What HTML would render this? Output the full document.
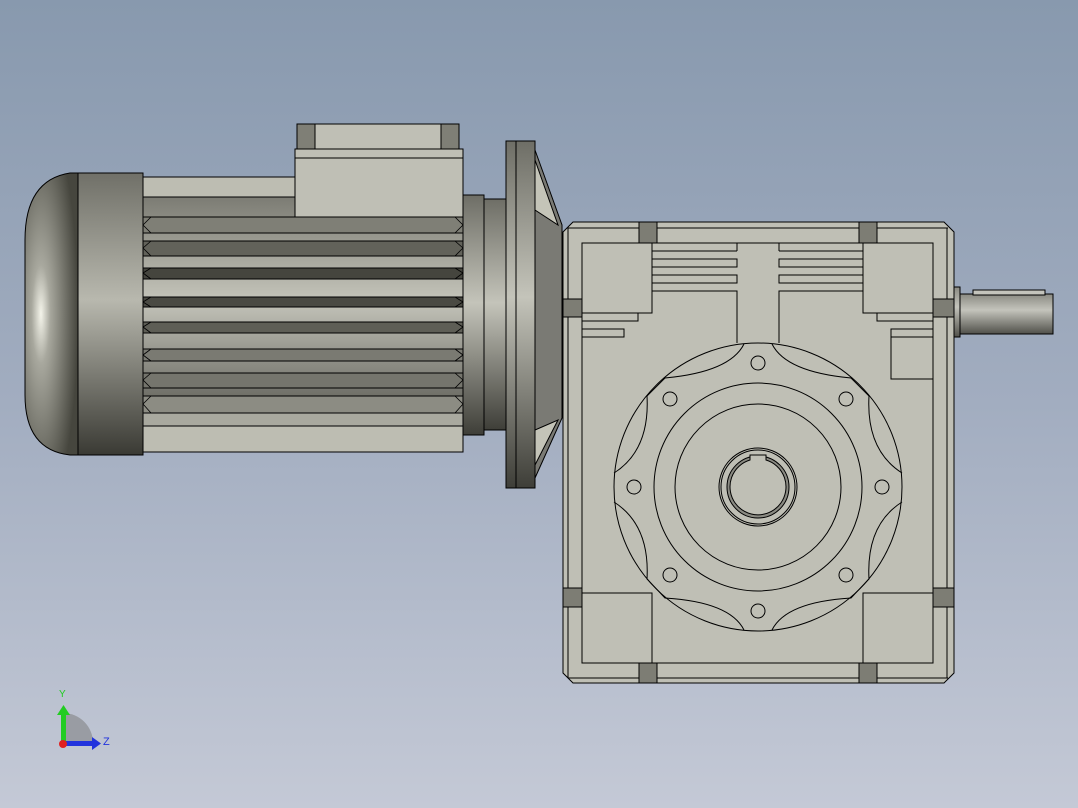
<!DOCTYPE html>
<html><head><meta charset="utf-8"><style>
html,body{margin:0;padding:0;width:1078px;height:808px;overflow:hidden}
svg{display:block}
</style></head><body>
<svg width="1078" height="808" viewBox="0 0 1078 808" xmlns="http://www.w3.org/2000/svg">
<defs>
<linearGradient id="bg" x1="0" y1="0" x2="0" y2="1">
<stop offset="0" stop-color="#8899ae"/><stop offset="0.5" stop-color="#a2adc0"/><stop offset="1" stop-color="#c4c9d6"/>
</linearGradient>
<linearGradient id="cyl" x1="0" y1="0" x2="0" y2="1">
<stop offset="0" stop-color="#6e6e66"/><stop offset="0.45" stop-color="#c4c4ba"/><stop offset="1" stop-color="#3e3e38"/>
</linearGradient>
<linearGradient id="cap" x1="0" y1="0" x2="0" y2="1">
<stop offset="0" stop-color="#707068"/><stop offset="0.45" stop-color="#b8b8ae"/><stop offset="1" stop-color="#3a3a34"/>
</linearGradient>
<radialGradient id="dome" cx="0.3" cy="0.5" r="0.7">
<stop offset="0" stop-color="#f4f4ea"/><stop offset="0.25" stop-color="#a8a89e"/><stop offset="1" stop-color="#46463e"/>
</radialGradient>
<linearGradient id="shaft" x1="0" y1="0" x2="0" y2="1">
<stop offset="0" stop-color="#8a8a82"/><stop offset="0.4" stop-color="#c4c4bc"/><stop offset="1" stop-color="#50504a"/>
</linearGradient>
</defs>
<rect width="1078" height="808" fill="url(#bg)"/>
<g stroke="#000" stroke-width="1">
<path d="M78,173 L70,173 Q25,180 25,240 L25,395 Q25,450 70,455 L78,455 Z" fill="url(#dome)"/>
<rect x="78" y="173" width="65" height="282" fill="url(#cap)"/>
<rect x="143" y="177" width="320" height="275" fill="url(#cyl)"/>
<g fill="#bdbdb2">
<rect x="143" y="177" width="320" height="20"/>
<rect x="143" y="426" width="320" height="26"/>
<rect x="143" y="413" width="320" height="13" fill="#a9a99f"/>
</g>
<rect x="143" y="217" width="320" height="16" fill="#7f7f76"/>
<rect x="143" y="241" width="320" height="15" fill="#62625a"/>
<rect x="143" y="268" width="320" height="11" fill="#45453e"/>
<rect x="143" y="297" width="320" height="10" fill="#4a4a43"/>
<rect x="143" y="322" width="320" height="11" fill="#5e5e56"/>
<rect x="143" y="349" width="320" height="12" fill="#7a7a72"/>
<rect x="143" y="373" width="320" height="15" fill="#75756d"/>
<rect x="143" y="396" width="320" height="17" fill="#8c8c83"/>
<g fill="none" stroke-width="0.8">
<path d="M143,225 L151,217 M143,225 L151,233 M463,225 L455,217 M463,225 L455,233"/>
<path d="M143,248 L151,241 M143,248 L151,256 M463,248 L455,241 M463,248 L455,256"/>
<path d="M143,273 L151,268 M143,273 L151,279 M463,273 L455,268 M463,273 L455,279"/>
<path d="M143,302 L151,297 M143,302 L151,307 M463,302 L455,297 M463,302 L455,307"/>
<path d="M143,327 L151,322 M143,327 L151,333 M463,327 L455,322 M463,327 L455,333"/>
<path d="M143,355 L151,349 M143,355 L151,361 M463,355 L455,349 M463,355 L455,361"/>
<path d="M143,380 L151,373 M143,380 L151,388 M463,380 L455,373 M463,380 L455,388"/>
<path d="M143,404 L151,396 M143,404 L151,413 M463,404 L455,396 M463,404 L455,413"/>
</g>
<rect x="297" y="124" width="162" height="25" fill="#bfbfb5"/>
<rect x="297" y="124" width="18" height="25" fill="#7f7f76"/>
<rect x="441" y="124" width="18" height="25" fill="#7f7f76"/>
<rect x="295" y="149" width="168" height="68" fill="#bfbfb5"/>
<line x1="295" y1="158" x2="463" y2="158"/>
<rect x="463" y="195" width="21" height="240" fill="url(#cyl)"/>
<rect x="484" y="199" width="22" height="231" fill="url(#cyl)"/>
<path d="M535,150 L562,225 L562,418 L535,478 Z" fill="#7a7a74"/>
<path d="M535,160 L558,225 L535,210 Z M535,465 L558,420 L535,430 Z" fill="#c4c4b8"/>
<rect x="506" y="141" width="29" height="347" fill="url(#cyl)"/>
<line x1="516" y1="141" x2="516" y2="488"/>
<path d="M573,222 L944,222 L954,232 L954,673 L944,683 L573,683 L563,673 L563,232 Z" fill="#bfbfb5"/>
<line x1="568" y1="228" x2="948" y2="228"/>
<line x1="568" y1="678" x2="948" y2="678"/>
<line x1="568" y1="228" x2="568" y2="678"/>
<line x1="947" y1="228" x2="947" y2="678"/>
<g fill="#7d7d74">
<rect x="639" y="222" width="18" height="21"/><rect x="859" y="222" width="18" height="21"/>
<rect x="639" y="663" width="18" height="20"/><rect x="859" y="663" width="18" height="20"/>
<rect x="563" y="299" width="19" height="18"/><rect x="563" y="588" width="19" height="19"/>
<rect x="933" y="299" width="21" height="18"/><rect x="933" y="588" width="21" height="19"/>
</g>
<g fill="none">
<rect x="582" y="243" width="351" height="420"/>
<rect x="582" y="243" width="70" height="70"/>
<rect x="863" y="243" width="70" height="70"/>
<rect x="582" y="593" width="70" height="70"/>
<rect x="863" y="593" width="70" height="70"/>
<path d="M652,251 H737 M652,259 H737 V267 H652 M652,275 H737 V283 H652 M652,291 H737 V343 M737,243 V251"/>
<path d="M863,251 H779 M863,259 H779 V267 H863 M863,275 H779 V283 H863 M863,291 H779 V343 M779,243 V251"/>
<path d="M582,321 H638 V313 M582,329 H624 V337 H582"/>
<path d="M933,321 H877 V313 M933,329 H891 V337"/>
<rect x="891" y="337" width="42" height="42"/>
<circle cx="758" cy="487" r="144"/>
<circle cx="758" cy="487" r="104"/>
<circle cx="758" cy="487" r="83"/>
<path d="M744,344 Q730,372 665,378 L647,396 Q650,450 614,473 M614,502 Q650,525 647,579 L665,598 Q730,602 744,630"/>
<path d="M772,344 Q786,372 851,378 L869,396 Q866,450 902,473 M902,502 Q866,525 869,579 L851,598 Q786,602 772,630"/>
<circle cx="758" cy="363" r="7"/><circle cx="758" cy="611" r="7"/>
<circle cx="634" cy="487" r="7"/><circle cx="882" cy="487" r="7"/>
<circle cx="670" cy="399" r="7"/><circle cx="846" cy="399" r="7"/>
<circle cx="670" cy="575" r="7"/><circle cx="846" cy="575" r="7"/>
<circle cx="758" cy="487" r="39"/>
<circle cx="758" cy="487" r="37"/>
</g>
<circle cx="758" cy="487" r="31" fill="#8a8a82"/>
<path d="M758,459 m-8,1 v-5 h16 v5 A28,28 0 1 1 750,460 Z" fill="#bfbfb5"/>
<rect x="954" y="287" width="6" height="50" fill="url(#shaft)"/>
<rect x="960" y="294" width="93" height="40" fill="url(#shaft)"/>
<rect x="973" y="290" width="72" height="5" fill="#c4c4bc"/>
</g>
<path d="M63,743 L63,713 A30,30 0 0 1 93,743 Z" fill="#999ca3"/>
<rect x="61" y="713" width="5" height="30" fill="#22cc22"/>
<path d="M57,715 L63.5,705 L70,715 Z" fill="#22cc22"/>
<rect x="63" y="741" width="30" height="5" fill="#2233dd"/>
<path d="M92,737 L101,743.5 L92,750 Z" fill="#2233dd"/>
<circle cx="63" cy="744" r="4" fill="#e02020"/>
<text x="59" y="697" font-family="Liberation Sans, sans-serif" font-size="10" fill="#22cc22">Y</text>
<text x="103" y="745" font-family="Liberation Sans, sans-serif" font-size="11" fill="#2233dd">Z</text>
</svg>
</body></html>
